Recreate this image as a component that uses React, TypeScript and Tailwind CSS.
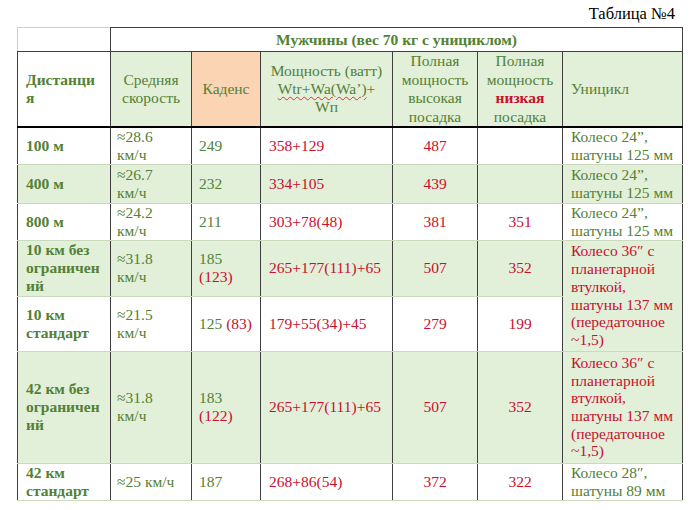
import React from "react";

const G = "text-[#538135]";
const R = "text-[#c8102e]";

const vb = "border-l border-r border-l-[#3f3f3f] border-r-[#3f3f3f]";

function Td({
  children,
  className = "",
  rowSpan,
  colSpan,
}: {
  children?: React.ReactNode;
  className?: string;
  rowSpan?: number;
  colSpan?: number;
}) {
  return (
    <td
      rowSpan={rowSpan}
      colSpan={colSpan}
      className={`${vb} border-t border-b border-t-[#c9dabd] border-b-[#c9dabd] align-middle p-0 ${className}`}
    >
      {children}
    </td>
  );
}

export default function App() {
  const white = "bg-white";
  const green = "bg-[#e2efd9]";
  return (
    <div
      className="w-[700px] h-[510px] bg-white relative"
      style={{ fontFamily: '"Liberation Serif", "Times New Roman", serif' }}
    >
      <div className="h-[27px] pr-[25px] pt-[5px] text-right text-[16.5px] leading-[18px] text-black">
        Таблица №4
      </div>
      <table className="ml-[17px] border-collapse table-fixed text-[15.5px] leading-[17.7px]" style={{ width: 665 }}>
        <colgroup>
          <col style={{ width: 93 }} />
          <col style={{ width: 81 }} />
          <col style={{ width: 69 }} />
          <col style={{ width: 132 }} />
          <col style={{ width: 85 }} />
          <col style={{ width: 85 }} />
          <col style={{ width: 120 }} />
        </colgroup>
        <tbody>
          <tr className="h-[24px]">
            <td className="border border-[#c9d3bd] border-b-[#3f3f3f] border-r-[#3f3f3f] bg-white p-0" />
            <td
              colSpan={6}
              className={`border border-[#3f3f3f] bg-white text-center font-bold ${G} p-0`}
            >
              Мужчины (вес 70 кг с унициклом)
            </td>
          </tr>
          <tr className="h-[75px] border-b-2 border-b-black">
            <td className={`${vb} border-b-2 border-b-black bg-white pl-[8px] font-bold ${G} align-middle`}>
              Дистанци
              <br />я
            </td>
            <td className={`${vb} border-b-2 border-b-black ${green} text-center ${G} align-middle`}>
              Средняя
              <br />
              скорость
            </td>
            <td className={`${vb} border-b-2 border-b-black bg-[#fbd4b4] text-center ${G} align-middle`}>
              Каденс
            </td>
            <td className={`${vb} border-b-2 border-b-black ${green} text-center ${G} align-middle whitespace-nowrap`}>
              Мощность (ватт)
              <br />
              <span className="underline decoration-wavy decoration-[#e03030] decoration-1 underline-offset-2">
                Wtr+Wa(Wa’)
              </span>
              +
              <br />
              Wп
            </td>
            <td className={`${vb} border-b-2 border-b-black ${green} text-center ${G} align-middle leading-[18.5px]`}>
              Полная
              <br />
              мощность
              <br />
              высокая
              <br />
              посадка
            </td>
            <td className={`${vb} border-b-2 border-b-black ${green} text-center ${G} align-middle leading-[18.5px]`}>
              Полная
              <br />
              мощность
              <br />
              <span className={`${R} font-bold`}>низкая</span>
              <br />
              посадка
            </td>
            <td className={`${vb} border-b-2 border-b-black ${green} pl-[8px] ${G} align-middle`}>
              Уницикл
            </td>
          </tr>

          {/* 100 м */}
          <tr className="h-[37px]">
            <Td className={`${white} pl-[8px] font-bold ${G}`}>100 м</Td>
            <Td className={`${white} pl-[6px] ${G}`}>
              ≈28.6
              <br />
              км/ч
            </Td>
            <Td className={`${white} pl-[7px] ${G}`}>249</Td>
            <Td className={`${white} pl-[8px] ${R}`}>358+129</Td>
            <Td className={`${white} text-center ${R}`}>487</Td>
            <Td className={white} />
            <Td className={`${white} pl-[8px] ${G} whitespace-nowrap`}>
              Колесо 24”,
              <br />
              шатуны 125 мм
            </Td>
          </tr>

          {/* 400 м */}
          <tr className="h-[39px]">
            <Td className={`${green} pl-[8px] font-bold ${G}`}>400 м</Td>
            <Td className={`${green} pl-[6px] ${G}`}>
              ≈26.7
              <br />
              км/ч
            </Td>
            <Td className={`${green} pl-[7px] ${G}`}>232</Td>
            <Td className={`${green} pl-[8px] ${R}`}>334+105</Td>
            <Td className={`${green} text-center ${R}`}>439</Td>
            <Td className={green} />
            <Td className={`${green} pl-[8px] ${G} whitespace-nowrap`}>
              Колесо 24”,
              <br />
              шатуны 125 мм
            </Td>
          </tr>

          {/* 800 м */}
          <tr className="h-[37px]">
            <Td className={`${white} pl-[8px] font-bold ${G}`}>800 м</Td>
            <Td className={`${white} pl-[6px] ${G}`}>
              ≈24.2
              <br />
              км/ч
            </Td>
            <Td className={`${white} pl-[7px] ${G}`}>211</Td>
            <Td className={`${white} pl-[8px] ${R}`}>303+78(48)</Td>
            <Td className={`${white} text-center ${R}`}>381</Td>
            <Td className={`${white} text-center ${R}`}>351</Td>
            <Td className={`${white} pl-[8px] ${G} whitespace-nowrap`}>
              Колесо 24”,
              <br />
              шатуны 125 мм
            </Td>
          </tr>

          {/* 10 км без ограничений */}
          <tr className="h-[56px]">
            <Td className={`${green} pl-[8px] font-bold ${G}`}>
              10 км без
              <br />
              ограничен
              <br />
              ий
            </Td>
            <Td className={`${green} pl-[6px] ${G}`}>
              ≈31.8
              <br />
              км/ч
            </Td>
            <Td className={`${green} pl-[7px] ${G}`}>
              185
              <br />
              <span className={R}>(123)</span>
            </Td>
            <Td className={`${green} pl-[8px] ${R}`}>265+177(111)+65</Td>
            <Td className={`${green} text-center ${R}`}>507</Td>
            <Td className={`${green} text-center ${R}`}>352</Td>
            <Td rowSpan={2} className={`${green} pl-[8px] ${R} whitespace-nowrap`}>
              Колесо 36″ с
              <br />
              планетарной
              <br />
              втулкой,
              <br />
              шатуны 137 мм
              <br />
              (передаточное
              <br />
              ~1,5)
            </Td>
          </tr>

          {/* 10 км стандарт */}
          <tr className="h-[55px]">
            <Td className={`${white} pl-[8px] font-bold ${G}`}>
              10 км
              <br />
              стандарт
            </Td>
            <Td className={`${white} pl-[6px] ${G}`}>
              ≈21.5
              <br />
              км/ч
            </Td>
            <Td className={`${white} pl-[7px] ${G} whitespace-nowrap`}>
              125 <span className={R}>(83)</span>
            </Td>
            <Td className={`${white} pl-[8px] ${R}`}>179+55(34)+45</Td>
            <Td className={`${white} text-center ${R}`}>279</Td>
            <Td className={`${white} text-center ${R}`}>199</Td>
          </tr>

          {/* 42 км без ограничений */}
          <tr className="h-[112px]">
            <Td className={`${green} pl-[8px] font-bold ${G}`}>
              42 км без
              <br />
              ограничен
              <br />
              ий
            </Td>
            <Td className={`${green} pl-[6px] ${G}`}>
              ≈31.8
              <br />
              км/ч
            </Td>
            <Td className={`${green} pl-[7px] ${G}`}>
              183
              <br />
              <span className={R}>(122)</span>
            </Td>
            <Td className={`${green} pl-[8px] ${R}`}>265+177(111)+65</Td>
            <Td className={`${green} text-center ${R}`}>507</Td>
            <Td className={`${green} text-center ${R}`}>352</Td>
            <Td className={`${green} pl-[8px] ${R} whitespace-nowrap`}>
              Колесо 36″ с
              <br />
              планетарной
              <br />
              втулкой,
              <br />
              шатуны 137 мм
              <br />
              (передаточное
              <br />
              ~1,5)
            </Td>
          </tr>

          {/* 42 км стандарт */}
          <tr className="h-[37px]">
            <Td className={`${white} pl-[8px] font-bold ${G} border-b-[#3f3f3f]`}>
              42 км
              <br />
              стандарт
            </Td>
            <Td className={`${white} pl-[6px] ${G} whitespace-nowrap border-b-[#3f3f3f]`}>≈25 км/ч</Td>
            <Td className={`${white} pl-[7px] ${G} border-b-[#3f3f3f]`}>187</Td>
            <Td className={`${white} pl-[8px] ${R} border-b-[#3f3f3f]`}>268+86(54)</Td>
            <Td className={`${white} text-center ${R} border-b-[#3f3f3f]`}>372</Td>
            <Td className={`${white} text-center ${R} border-b-[#3f3f3f]`}>322</Td>
            <Td className={`${white} pl-[8px] ${G} whitespace-nowrap border-b-[#3f3f3f]`}>
              Колесо 28″,
              <br />
              шатуны 89 мм
            </Td>
          </tr>
        </tbody>
      </table>
    </div>
  );
}
